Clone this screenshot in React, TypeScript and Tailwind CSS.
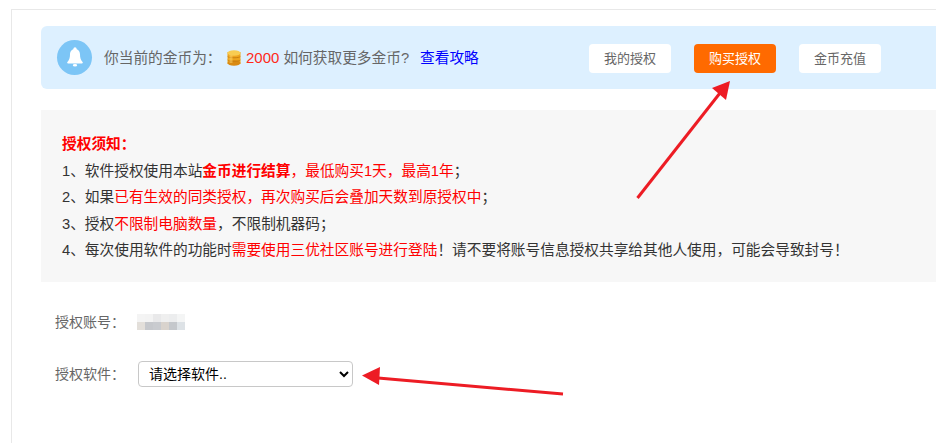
const FONT = "font-['Liberation_Sans','Noto_Sans_CJK_SC',sans-serif]";

function Bell() {
  return (
    <div className="flex h-[35px] w-[35px] shrink-0 items-center justify-center rounded-full bg-[#7cc5f6]">
      <svg width="18" height="21" viewBox="0 0 18 21" fill="#fff">
        <circle cx="9" cy="1.8" r="1.6" />
        <path d="M9 2C5.6 2 4 4.6 4 7.6c0 3.4-.8 5.4-2.6 7.4-.5.6-.1 1.400.6 1.400h14c.7 0 1.100-.8.6-1.400C14.800 13 14 11 14 7.600 14 4.600 12.400 2 9 2z" />
        <ellipse cx="9" cy="18.300" rx="2.200" ry="1.300" />
      </svg>
    </div>
  );
}

function Coin() {
  return (
    <svg width="14" height="16" viewBox="0 0 14 16" className="shrink-0">
      <rect x="0.500" y="2" width="13" height="12" fill="#eda51f" />
      <ellipse cx="7" cy="13" rx="6.500" ry="2.800" fill="#d98a12" />
      <ellipse cx="7" cy="3" rx="6.500" ry="2.800" fill="#f8cc52" />
      <path d="M0.700 6.500c1 1.700 11.600 1.700 12.600 0M0.700 10c1 1.700 11.600 1.700 12.600 0" stroke="#c77d0e" strokeWidth="0.900" fill="none" />
      <rect x="2.500" y="5" width="3" height="8" fill="#fbd46a" opacity="0.500" />
    </svg>
  );
}

function TopButton({ label, active }: { label: string; active?: boolean }) {
  return (
    <div
      className={
        active
          ? "flex h-[29px] w-[82px] items-center justify-center rounded-[4px] bg-[#ff6a00] text-[13px] text-white"
          : "flex h-[29px] w-[82px] items-center justify-center rounded-[4px] bg-white text-[13px] text-[#666]"
      }
    >
      {label}
    </div>
  );
}

const mosaicTop = ["bg-[#f4f4f4]", "bg-[#f3f3f3]", "bg-[#e9e9ea]", "bg-[#efefef]", "bg-[#ecedee]", "bg-[#f4f5f5]"];
const mosaicBottom = ["bg-[#e3dfda]", "bg-[#c6c8cc]", "bg-[#c9cbcf]", "bg-[#d9d3cd]", "bg-[#c5c8cc]", "bg-[#dde2e6]"];

function Mosaic() {
  return (
    <div className="flex h-[16px] w-[48px] flex-col">
      <div className="flex h-[8px]">
        {mosaicTop.map((c, i) => (
          <div key={i} className={`h-full w-[8px] ${c}`} />
        ))}
      </div>
      <div className="flex h-[8px]">
        {mosaicBottom.map((c, i) => (
          <div key={i} className={`h-full w-[8px] ${c}`} />
        ))}
      </div>
    </div>
  );
}

export default function App() {
  return (
    <div className={`relative h-[443px] w-[936px] overflow-hidden bg-white ${FONT}`}>
      <div className="ml-[11px] mt-[9px] h-[434px] border-l border-t border-[#e8e8e8] pl-[29px] pt-[16px]">
        <div className="flex h-[63px] items-center rounded-l-[6px] bg-[#ddf0ff] pl-[16px]">
          <Bell />
          <div className="ml-[12px] flex w-[485px] items-center text-[14.700px] leading-[20px] text-[#666]">
            <span className="w-[123px]">你当前的金币为：</span>
            <Coin />
            <span className="ml-[5px] text-[15px] text-[#ff2a1a]">2000</span>
            <span className="ml-[4px]">如何获取更多金币?</span>
            <span className="ml-[11px] text-[#0000ff]">查看攻略</span>
          </div>
          <div className="mt-[2px] flex gap-[23px]">
            <TopButton label="我的授权" />
            <TopButton label="购买授权" active />
            <TopButton label="金币充值" />
          </div>
        </div>

        <div className="mt-[21px] bg-[#f7f7f7] px-[21px] pb-[18.500px] pt-[21px] text-[14.700px] leading-[26.500px] text-[#333]">
          <p className="font-bold text-[#ff0000]">授权须知：</p>
          <p>
            1、软件授权使用本站<b className="text-[#ff0000]">金币进行结算</b>
            <span className="text-[#ff0000]">，最低购买1天，最高1年</span>；
          </p>
          <p>
            2、如果<span className="text-[#ff0000]">已有生效的同类授权，再次购买后会叠加天数到原授权中</span>；
          </p>
          <p>
            3、授权<span className="text-[#ff0000]">不限制电脑数量</span>，不限制机器码；
          </p>
          <p>
            4、每次使用软件的功能时<span className="text-[#ff0000]">需要使用三优社区账号进行登陆</span>！请不要将账号信息授权共享给其他人使用，可能会导致封号！
          </p>
        </div>

        <div className="mt-[30px] flex h-[20px] items-center pl-[14px] text-[14px] text-[#666]">
          <span className="w-[82px]">授权账号：</span>
          <Mosaic />
        </div>

        <div className="mt-[29px] flex items-center pl-[14px] text-[14px] text-[#666]">
          <span className="w-[83px]">授权软件：</span>
          <select className="h-[26px] w-[215px] rounded-[4px] border border-[#c8c8c8] bg-white pl-[6px] text-[14px] text-black">
            <option>请选择软件..</option>
          </select>
        </div>
      </div>

      <svg className="pointer-events-none absolute left-0 top-0" width="936" height="443" viewBox="0 0 936 443">
        <line x1="637.500" y1="198" x2="720" y2="93" stroke="#ed1c24" strokeWidth="3" />
        <polygon points="730,81 712,88 726,100" fill="#ed1c24" />
        <line x1="563" y1="394" x2="378" y2="378" stroke="#ed1c24" strokeWidth="3" />
        <polygon points="362,375.500 380,367 379,385" fill="#ed1c24" />
      </svg>
    </div>
  );
}
